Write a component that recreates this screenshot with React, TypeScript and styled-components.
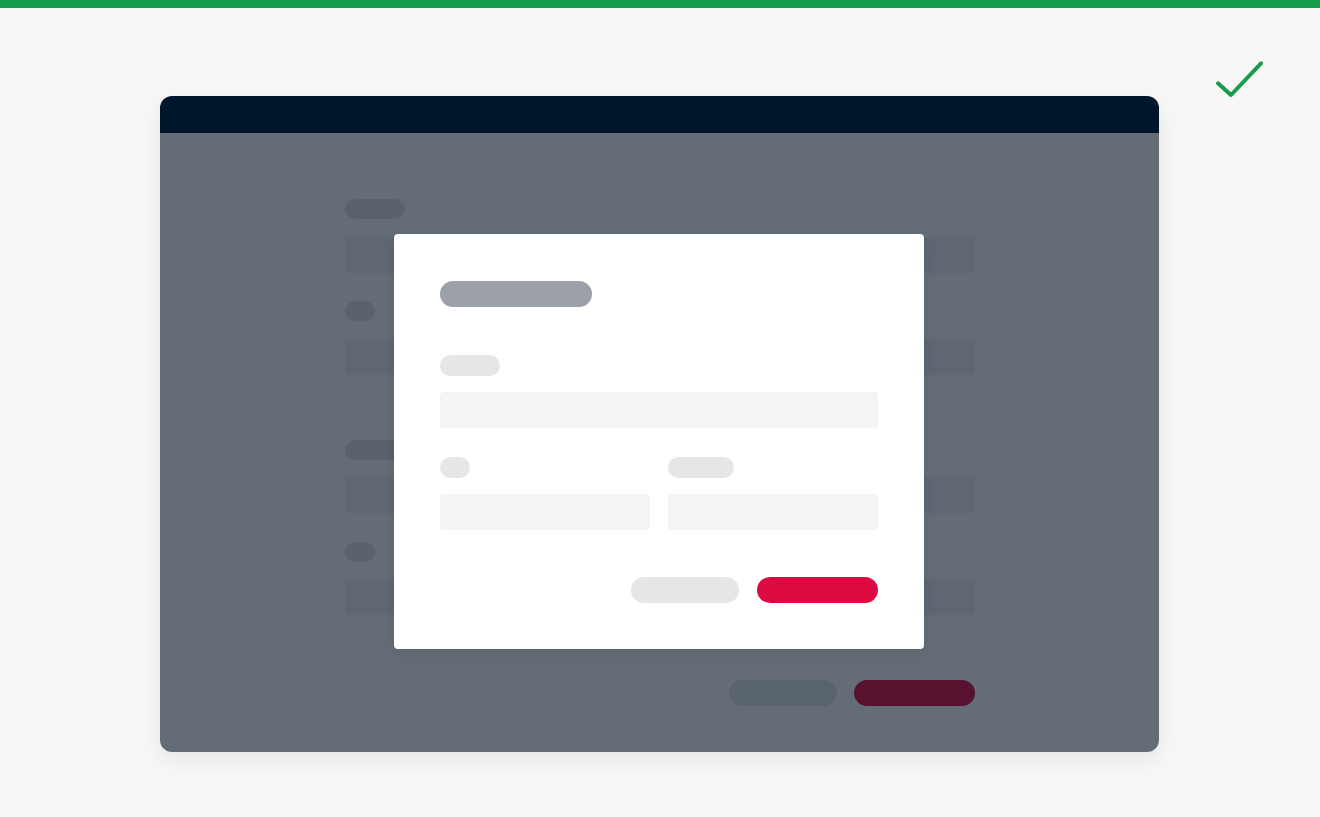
import React from "react";
import styled, { createGlobalStyle } from "styled-components";

const GlobalStyle = createGlobalStyle`
  html, body {
    margin: 0;
    padding: 0;
    background: #f7f7f7;
    font-family: "Inter", "Liberation Sans", sans-serif;
  }
`;

export default function App() {
  return (
    <>
      <GlobalStyle />
      <Page>
        <TopBar />
        <CheckMark viewBox="0 0 54 44" aria-label="Done">
          <polyline points="6,25.3 19,37 49,5.3" />
        </CheckMark>
        <Stage>
          <Window>
            <WindowHeader />
            <WindowBody>
              <Form>
                <Field>
                  <Label $w={60} />
                  <Input />
                </Field>
                <Field>
                  <Label $w={30} />
                  <Input />
                </Field>
                <Field $spaced>
                  <Label $w={80} />
                  <Input />
                </Field>
                <Field>
                  <Label $w={30} />
                  <Input />
                </Field>
                <Actions>
                  <Pill $w={108} $tone="#e5e6e8" />
                  <Pill $w={121} $tone="#dc0a41" />
                </Actions>
              </Form>

              <Overlay>
                <Modal>
                  <Title />
                  <ModalField>
                    <ModalLabel $w={60} />
                    <ModalInput />
                  </ModalField>
                  <ModalRow>
                    <ModalField>
                      <ModalLabel $w={30} />
                      <ModalInput />
                    </ModalField>
                    <ModalField>
                      <ModalLabel $w={66} />
                      <ModalInput />
                    </ModalField>
                  </ModalRow>
                  <ModalActions>
                    <Pill $w={108} $tone="#e5e6e8" />
                    <Pill $w={121} $tone="#dc0a41" />
                  </ModalActions>
                </Modal>
              </Overlay>
            </WindowBody>
          </Window>
        </Stage>
      </Page>
    </>
  );
}

// --- Styled Components ---

const Page = styled.div`
  position: relative;
  width: 1320px;
  height: 817px;
  overflow: hidden;
  background: #f7f7f7;
`;

const TopBar = styled.div`
  height: 8px;
  background: #179c4b;
`;

const CheckMark = styled.svg`
  position: absolute;
  left: 1212px;
  top: 58px;
  width: 54px;
  height: 44px;

  polyline {
    fill: none;
    stroke: #1a9b4b;
    stroke-width: 4;
    stroke-linecap: round;
    stroke-linejoin: round;
  }
`;

const Stage = styled.div`
  padding: 88px 0 0 160px;
`;

const Window = styled.div`
  width: 999px;
  height: 656px;
  border-radius: 12px;
  overflow: hidden;
  display: flex;
  flex-direction: column;
  background: #ffffff;
  box-shadow: 0 8px 22px rgba(20, 30, 45, 0.08);
`;

const WindowHeader = styled.div`
  height: 37px;
  flex-shrink: 0;
  background: #00172b;
`;

const WindowBody = styled.div`
  position: relative;
  flex: 1;
  background: #ffffff;
`;

const Form = styled.div`
  width: 630px;
  margin: 66px 0 0 185px;
  display: flex;
  flex-direction: column;
`;

const Field = styled.div<{ $spaced?: boolean }>`
  display: flex;
  flex-direction: column;
  gap: 17.5px;
  margin-top: ${({ $spaced }) => ($spaced ? "65px" : "28.5px")};

  &:first-child {
    margin-top: 0;
  }
`;

const Label = styled.div<{ $w: number }>`
  width: ${({ $w }) => $w}px;
  height: 20px;
  border-radius: 10px;
  background: #e0e2e6;
`;

const Input = styled.div`
  height: 36px;
  border-radius: 4px;
  background: #eeeef3;
`;

const Actions = styled.div`
  display: flex;
  justify-content: flex-end;
  gap: 17px;
  margin-top: 64.5px;
`;

const Pill = styled.div<{ $w: number; $tone: string }>`
  width: ${({ $w }) => $w}px;
  height: 26px;
  border-radius: 13px;
  background: ${({ $tone }) => $tone};
`;

const Overlay = styled.div`
  position: absolute;
  inset: 0;
  padding: 0 1px 2px 0;
  background: rgba(10, 24, 38, 0.63);
  display: flex;
  align-items: center;
  justify-content: center;
`;

const Modal = styled.div`
  width: 530px;
  box-sizing: border-box;
  padding: 47px 46px 46px;
  background: #ffffff;
  border-radius: 4px;
  box-shadow: 0 4px 14px rgba(0, 0, 0, 0.08);
  display: flex;
  flex-direction: column;
`;

const Title = styled.div`
  width: 152px;
  height: 26px;
  border-radius: 13px;
  background: #9ca0a8;
  margin-bottom: 48px;
`;

const ModalField = styled.div`
  flex: 1;
  display: flex;
  flex-direction: column;
  gap: 16px;
`;

const ModalLabel = styled.div<{ $w: number }>`
  width: ${({ $w }) => $w}px;
  height: 21px;
  border-radius: 10.5px;
  background: #e5e6e8;
`;

const ModalInput = styled.div`
  height: 36px;
  border-radius: 4px;
  background: #f2f4f5;
`;

const ModalRow = styled.div`
  display: flex;
  gap: 18px;
  margin-top: 29px;
`;

const ModalActions = styled.div`
  display: flex;
  justify-content: flex-end;
  gap: 18px;
  margin-top: 47px;
`;
